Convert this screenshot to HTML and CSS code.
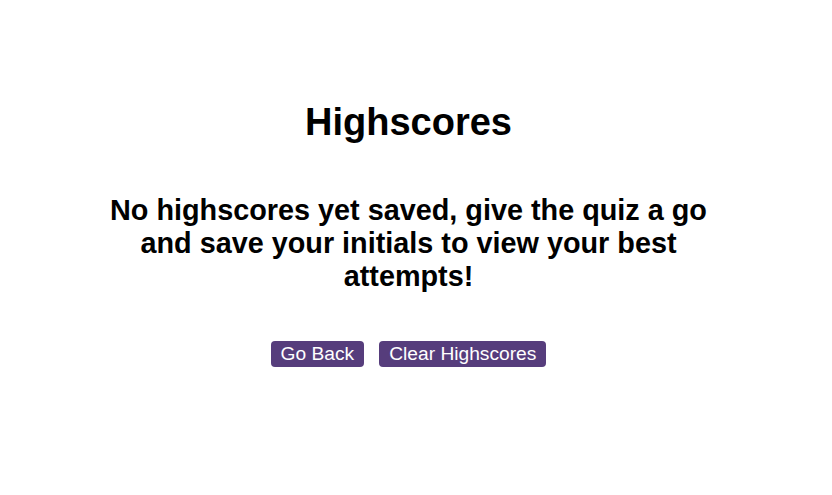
FILE: index.html
```html
<!DOCTYPE html>
<html lang="en">
<head>
<meta charset="utf-8">
<title>Highscores</title>
<link rel="stylesheet" href="styles.css">
</head>
<body>
<main class="page">
  <h1 class="title">Highscores</h1>
  <p class="message">No highscores yet saved, give the quiz a go and save your initials to view your best attempts!</p>
  <div class="actions">
    <button class="btn" type="button">Go Back</button>
    <button class="btn" type="button">Clear Highscores</button>
  </div>
</main>
</body>
</html>
```

FILE: styles.css
```css
html, body {
  margin: 0;
  padding: 0;
  background: #ffffff;
}

body {
  font-family: "Liberation Sans", Arial, sans-serif;
  color: #000000;
}

.page {
  box-sizing: border-box;
  width: 817px;
  padding-top: 100px;
  display: flex;
  flex-direction: column;
  align-items: center;
  text-align: center;
}

.title {
  margin: 0;
  font-size: 38px;
  font-weight: bold;
  line-height: 44px;
}

.message {
  margin: 50px 0 0;
  width: 640px;
  font-size: 28.8px;
  font-weight: bold;
  line-height: 33px;
}

.actions {
  margin-top: 48px;
  display: flex;
  gap: 15px;
  justify-content: center;
}

.btn {
  font-family: "Liberation Sans", Arial, sans-serif;
  font-size: 19.2px;
  line-height: 22px;
  padding: 2px 10px;
  border: none;
  border-radius: 4px;
  background: #563d7c;
  color: #ffffff;
  cursor: pointer;
}
```
